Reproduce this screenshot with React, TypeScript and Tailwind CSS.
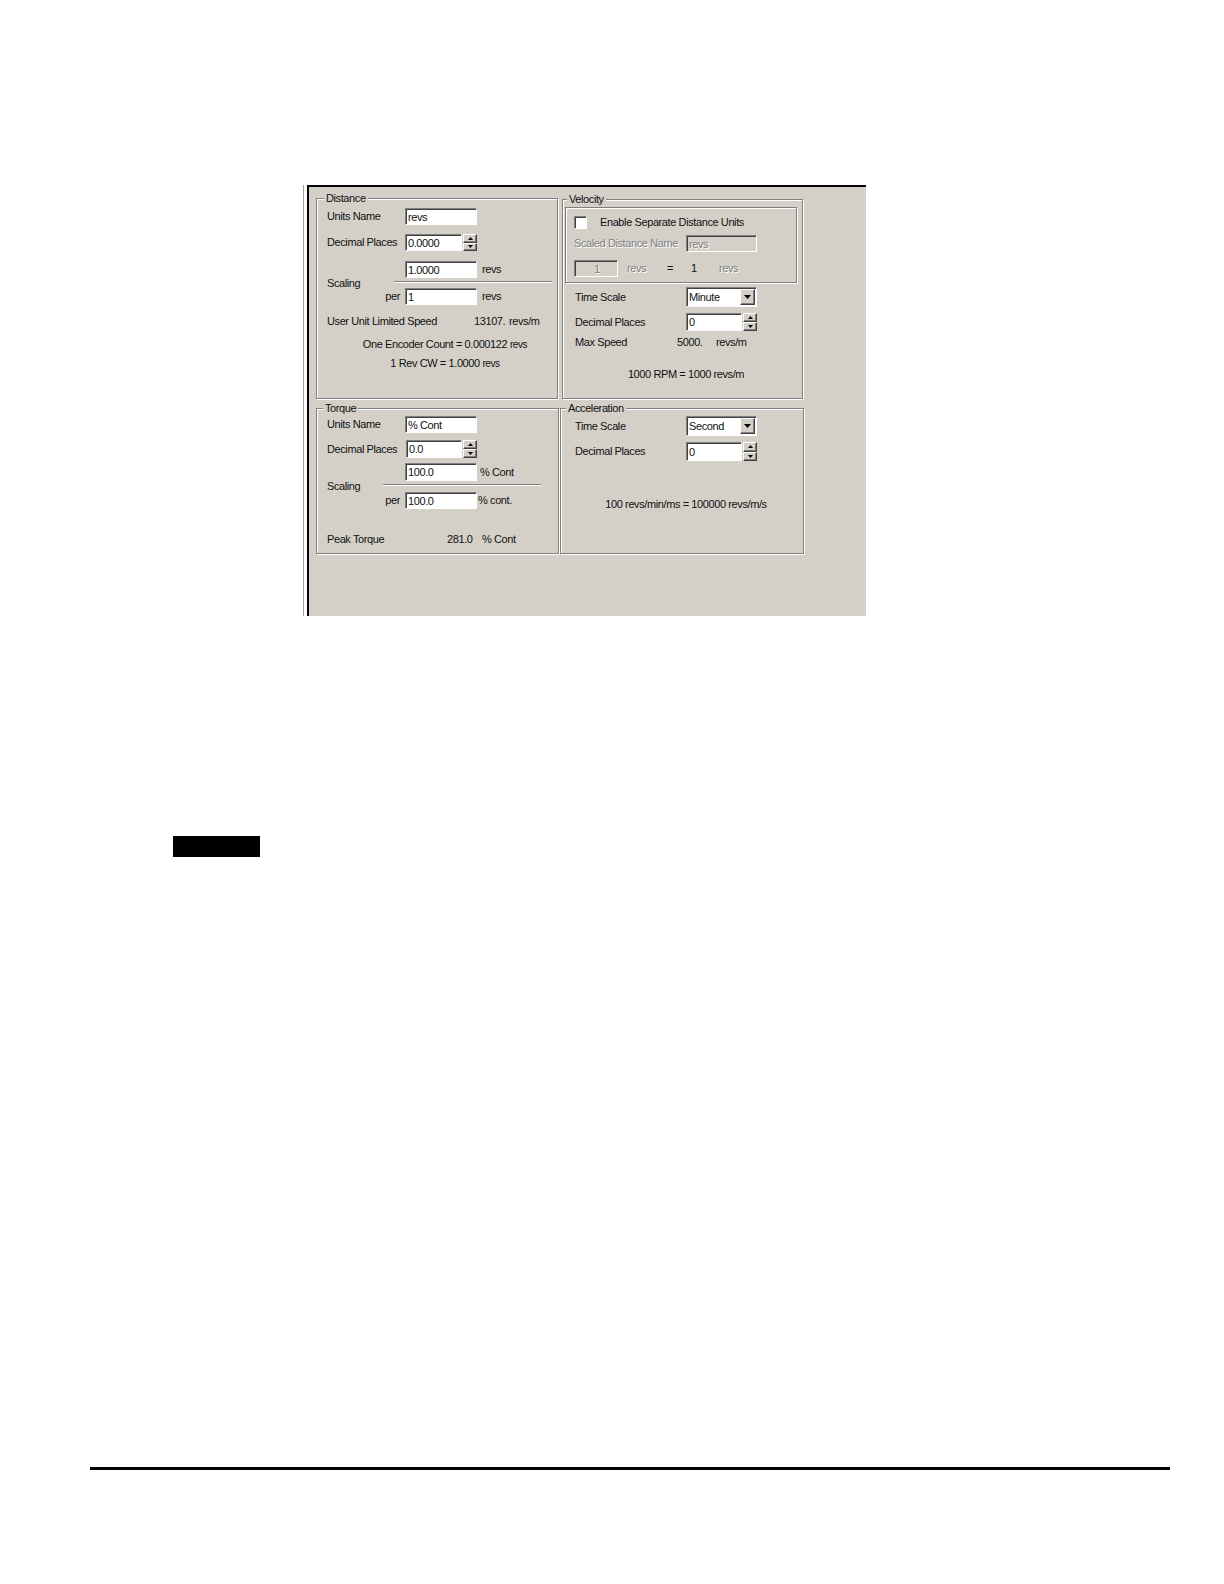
import type { ReactNode } from 'react'

const sunken =
  'border border-t-[#808080] border-l-[#808080] border-b-white border-r-white shadow-[inset_1px_1px_0_#404040]'
const raised =
  'border border-t-white border-l-white border-b-[#404040] border-r-[#404040] shadow-[inset_-1px_-1px_0_#808080] bg-[#d4d0c8]'
const dim = 'text-[#808080] [text-shadow:1px_1px_0_#fff]'

function Group({
  label,
  labelClass = '',
  className = '',
  children,
}: {
  label?: string
  labelClass?: string
  className?: string
  children: ReactNode
}) {
  return (
    <div
      className={`relative flex flex-col border border-[#808080] shadow-[1px_1px_0_#fff,inset_1px_1px_0_#fff] ${className}`}
    >
      {label ? (
        <span className={`absolute -top-[8px] bg-[#d4d0c8] px-[2px] leading-[14px] ${labelClass}`}>{label}</span>
      ) : null}
      {children}
    </div>
  )
}

function Edit({ children, className = '', disabled = false }: { children: ReactNode; className?: string; disabled?: boolean }) {
  return (
    <div
      className={`flex items-center pl-[2px] leading-[14px] ${sunken} ${disabled ? `bg-[#d4d0c8] ${dim}` : 'bg-white'} ${className}`}
    >
      {children}
    </div>
  )
}

function Spin({ className = '' }: { className?: string }) {
  return (
    <div className={`ml-[1px] flex w-[14px] flex-col ${className}`}>
      <div className={`flex flex-1 items-center justify-center ${raised}`}>
        <svg width="5" height="3" viewBox="0 0 5 3">
          <path d="M2.5 0L5 3H0z" fill="#000" />
        </svg>
      </div>
      <div className={`flex flex-1 items-center justify-center ${raised}`}>
        <svg width="5" height="3" viewBox="0 0 5 3">
          <path d="M0 0H5L2.5 3z" fill="#000" />
        </svg>
      </div>
    </div>
  )
}

function Combo({ value }: { value: string }) {
  return (
    <div className={`flex h-[20px] w-[71px] items-center justify-between bg-white pl-[2px] pr-[1px] ${sunken}`}>
      <span className="leading-[14px]">{value}</span>
      <div className={`flex h-[16px] w-[15px] items-center justify-center ${raised}`}>
        <svg width="7" height="4" viewBox="0 0 7 4">
          <path d="M0 0H7L3.5 4z" fill="#000" />
        </svg>
      </div>
    </div>
  )
}

function Rule({ className = '' }: { className?: string }) {
  return <div className={`h-[2px] w-[158px] border-t border-b border-t-[#808080] border-b-white ${className}`} />
}

export default function App() {
  return (
    <div className="flex h-[1584px] w-[1224px] flex-col overflow-hidden bg-white font-['Liberation_Sans',Arial,sans-serif] text-[11px] tracking-[-0.4px] text-[#111]">
      <div className="ml-[303px] mt-[185px] flex h-[431px] w-[563px] border-l border-[#a0a0a0] bg-white pl-[3px]">
        <div className="flex flex-1 flex-col border-t-2 border-l-2 border-black bg-[#d4d0c8] pl-[7px] pt-[11px]">
          <div className="flex items-start">
            <Group label="Distance" labelClass="left-[7px]" className="h-[201px] w-[242px] pl-[10px] pt-[9px]">
              <div className="flex h-[17px] items-center">
                <span className="w-[78px]">Units Name</span>
                <Edit className="h-[17px] w-[72px]">revs</Edit>
              </div>
              <div className="mt-[9px] flex h-[17px] items-center">
                <span className="w-[78px]">Decimal Places</span>
                <Edit className="h-[17px] w-[57px]">0.0000</Edit>
                <Spin className="h-[17px]" />
              </div>
              <div className="mt-[10px] flex h-[44px] items-center">
                <span className="w-[56px]">Scaling</span>
                <div className="flex flex-col">
                  <div className="flex h-[17px] items-center pl-[22px]">
                    <Edit className="h-[17px] w-[72px]">1.0000</Edit>
                    <span className="ml-[5px]">revs</span>
                  </div>
                  <Rule className="ml-[11px] mt-[3px]" />
                  <div className="mt-[5px] flex h-[17px] items-center">
                    <span className="w-[17px] text-right">per</span>
                    <Edit className="ml-[5px] h-[17px] w-[72px]">1</Edit>
                    <span className="ml-[5px]">revs</span>
                  </div>
                </div>
              </div>
              <div className="mt-[9px] flex h-[14px] items-center">
                <span className="w-[147px]">User Unit Limited Speed</span>
                <span className="w-[35px]">13107.</span>
                <span>revs/m</span>
              </div>
              <div className="mt-[9px] h-[14px] w-[236px] text-center leading-[14px]">
                One Encoder Count = 0.000122 <span className="text-[10px]">revs</span>
              </div>
              <div className="mt-[5px] h-[14px] w-[236px] text-center leading-[14px]">
                1 Rev CW = 1.0000 <span className="text-[10px]">revs</span>
              </div>
            </Group>

            <Group label="Velocity" labelClass="left-[4px]" className="ml-[4px] mt-[1px] h-[200px] w-[241px]">
              <Group className="ml-[2px] mt-[7px] h-[76px] w-[232px] pl-[8px] pt-[8px]">
                <div className="flex h-[13px] items-center">
                  <div className={`h-[13px] w-[13px] bg-white ${sunken}`} />
                  <span className="ml-[13px]">Enable Separate Distance Units</span>
                </div>
                <div className="mt-[6px] flex h-[17px] items-center">
                  <span className={`w-[112px] ${dim}`}>Scaled Distance Name</span>
                  <Edit disabled className="h-[17px] w-[71px]">
                    revs
                  </Edit>
                </div>
                <div className="mt-[8px] flex h-[17px] items-center">
                  <Edit disabled className="h-[17px] w-[44px] justify-center">
                    1
                  </Edit>
                  <span className={`ml-[9px] w-[40px] ${dim}`}>revs</span>
                  <span className="w-[24px]">=</span>
                  <span className="w-[28px]">1</span>
                  <span className={dim}>revs</span>
                </div>
              </Group>
              <div className="flex flex-col pl-[12px]">
                <div className="mt-[4px] flex h-[20px] items-center">
                  <span className="w-[111px]">Time Scale</span>
                  <Combo value="Minute" />
                </div>
                <div className="mt-[6px] flex h-[18px] items-center">
                  <span className="w-[111px]">Decimal Places</span>
                  <Edit className="h-[18px] w-[56px]">0</Edit>
                  <Spin className="h-[18px]" />
                </div>
                <div className="mt-[4px] flex h-[14px] items-center">
                  <span className="w-[102px]">Max Speed</span>
                  <span className="w-[39px]">5000.</span>
                  <span>revs/m</span>
                </div>
                <div className="mt-[18px] h-[14px] w-[222px] text-center leading-[14px]">1000 RPM = 1000 revs/m</div>
              </div>
            </Group>
          </div>

          <div className="mt-[9px] flex items-start">
            <Group label="Torque" labelClass="left-[6px]" className="h-[146px] w-[243px] pl-[10px] pt-[7px]">
              <div className="flex h-[17px] items-center">
                <span className="w-[78px]">Units Name</span>
                <Edit className="h-[17px] w-[72px]">% Cont</Edit>
              </div>
              <div className="mt-[7px] flex h-[18px] items-center">
                <span className="w-[79px]">Decimal Places</span>
                <Edit className="h-[18px] w-[56px]">0.0</Edit>
                <Spin className="h-[18px]" />
              </div>
              <div className="mt-[5px] flex h-[46px] items-center">
                <span className="w-[56px]">Scaling</span>
                <div className="flex flex-col">
                  <div className="flex h-[18px] items-center pl-[22px]">
                    <Edit className="h-[18px] w-[72px]">100.0</Edit>
                    <span className="ml-[3px]">% Cont</span>
                  </div>
                  <Rule className="mt-[3px]" />
                  <div className="mt-[6px] flex h-[17px] items-center">
                    <span className="w-[17px] text-right">per</span>
                    <Edit className="ml-[5px] h-[17px] w-[72px]">100.0</Edit>
                    <span className="ml-[1px]">% cont.</span>
                  </div>
                </div>
              </div>
              <div className="mt-[23px] flex h-[14px] items-center">
                <span className="w-[120px]">Peak Torque</span>
                <span className="w-[35px]">281.0</span>
                <span>% Cont</span>
              </div>
            </Group>

            <Group label="Acceleration" labelClass="left-[5px]" className="ml-[1px] h-[146px] w-[244px] pl-[14px] pt-[7px]">
              <div className="flex h-[20px] items-center">
                <span className="w-[111px]">Time Scale</span>
                <Combo value="Second" />
              </div>
              <div className="mt-[6px] flex h-[19px] items-center">
                <span className="w-[111px]">Decimal Places</span>
                <Edit className="h-[19px] w-[56px]">0</Edit>
                <Spin className="h-[19px]" />
              </div>
              <div className="mt-[36px] h-[14px] w-[222px] text-center leading-[14px]">
                100 revs/min/ms = 100000 revs/m/s
              </div>
            </Group>
          </div>
        </div>
      </div>

      <div className="ml-[173px] mt-[220px] h-[21px] w-[87px] bg-black" />

      <div className="ml-[90px] mt-[610px] h-[3px] w-[1080px] bg-black" />
    </div>
  )
}
